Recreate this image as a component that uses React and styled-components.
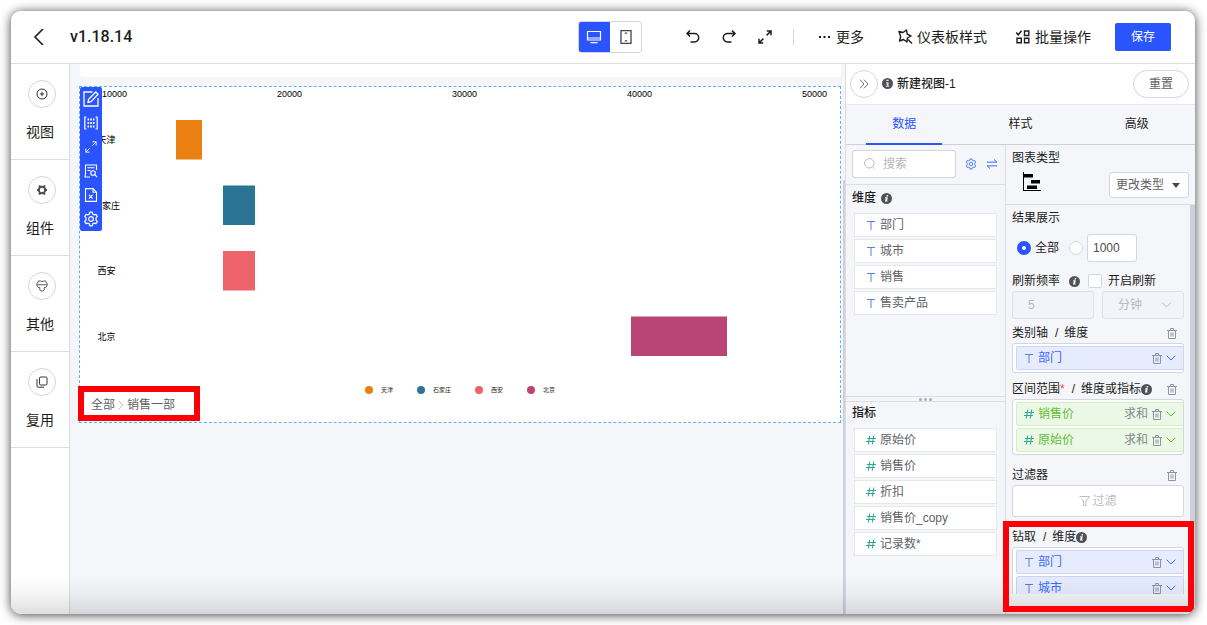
import React, { useState } from "react";
import styled, { createGlobalStyle, css } from "styled-components";

const blue = "#2954ff";
const line = "#dcdee2";
const field = "#d3d5df";
const ground = "#f5f6fa";
const ink = "#1b1d21";
const soft = "#606266";

const GlobalStyle = createGlobalStyle`
  * { box-sizing: border-box; }
  body { margin: 0; background: #fff; }
  body, button, input, select {
    font-family: "Liberation Sans", "Noto Sans CJK SC", sans-serif;
    font-size: 12px;
    line-height: 18px;
    color: ${ink};
  }
  button { padding: 0; border: 0; background: none; cursor: pointer; }
  svg { display: block; flex: none; }
`;

const Page = styled.div`
  height: 100vh;
  min-height: 600px;
  padding: 11px 12px 11px 11px;
`;

const Window = styled.div`
  position: relative;
  display: flex;
  flex-direction: column;
  height: 100%;
  overflow: hidden;
  border-radius: 10px;
  background: #fff;
`;

const Frame = styled.div`
  height: 100%;
  border-radius: 10px;
  box-shadow: 0 1px 11px rgba(0, 0, 0, 0.75);
`;

const BottomShade = styled.div`
  position: absolute;
  inset: auto 0 0 0;
  height: 40px;
  background: linear-gradient(rgba(0, 0, 0, 0), rgba(0, 0, 0, 0.04) 50%, rgba(0, 0, 0, 0.13));
  pointer-events: none;
`;

const Header = styled.header`
  display: flex;
  align-items: center;
  flex: none;
  height: 53px;
  padding: 0 24px 0 20px;
  border-bottom: 1px solid ${line};
`;

const Title = styled.h1`
  flex: 1;
  margin: 0 0 0 23px;
  font: 500 16px/24px Roboto, "Noto Sans CJK SC", sans-serif;
`;

const DeviceSwitch = styled.div`
  display: flex;
  height: 32px;
  margin-right: 43px;
  overflow: hidden;
  border: 1px solid ${field};
  border-radius: 3px;
`;

const DeviceButton = styled.button`
  display: grid;
  place-items: center;
  width: 31px;
  ${(p) => p.$active && css`
    width: 32px;
    margin: -1px 0 -1px -1px;
    background: ${blue};
    color: #fff;
  `}
`;

const History = styled.div`
  display: flex;
  gap: 20px;
  align-items: center;
`;

const Rule = styled.span`
  width: 1px;
  height: 16px;
  margin-right: 2px;
  background: ${field};
`;

const Actions = styled.div`
  display: flex;
  align-items: center;
  gap: 28px;
  margin: 0 24px 0 20px;
`;

const ActionButton = styled.button`
  display: flex;
  align-items: center;
  gap: 4px;
  font-size: 14px;
  line-height: 22px;
  white-space: nowrap;
  &:first-child { margin-right: 5px; }
`;

const SaveButton = styled.button`
  width: 56px;
  height: 28px;
  border-radius: 2px;
  background: ${blue};
  color: #fff;
`;

const Body = styled.div`
  display: flex;
  flex: 1;
  min-height: 0;
`;

const Sidebar = styled.nav`
  flex: none;
  width: 59px;
  border-right: 1px solid ${line};
`;

const SideItem = styled.button`
  display: flex;
  flex-direction: column;
  align-items: center;
  gap: 12px;
  width: 100%;
  height: 96px;
  padding-top: 16px;
  padding-left: 4px;
  border-bottom: 1px solid ${line};
  font-size: 14px;
  line-height: 24px;
`;

const SideLabel = styled.span`
  margin-right: 4px;
`;

const Circle = styled.span`
  display: grid;
  place-items: center;
  flex: none;
  width: 28px;
  height: 28px;
  border: 1px solid ${field};
  border-radius: 50%;
  background: #fff;
`;

const Canvas = styled.main`
  flex: 1;
  min-width: 0;
  padding: 0 2px 0 9px;
  background: ${ground};
`;

const UpperCard = styled.div`
  height: 13px;
  margin: 0 0 9px 1px;
  border-radius: 0 0 4px 4px;
  background: #fff;
`;

const ChartCard = styled.section`
  position: relative;
  min-height: 337px;
  border: 1px dashed #5fb0fb;
  background: #fff;
`;

const Chart = styled.svg`
  width: 100%;
  height: auto;
  font-family: "Liberation Sans", "Noto Sans CJK SC", sans-serif;
`;

const ChartTools = styled.div`
  position: absolute;
  top: 0;
  left: 0;
  border-radius: 2px;
  background: ${blue};
`;

const ToolButton = styled.button`
  display: grid;
  place-items: center;
  width: 22px;
  height: 24px;
  color: #fff;
`;

const Crumbs = styled.div`
  position: relative;
  display: flex;
  align-items: center;
  gap: 3px;
  width: fit-content;
  height: 35px;
  padding: 0 25px 0 11px;
`;

const CrumbLink = styled.a`
  color: ${soft};
  text-decoration: none;
`;

const Highlight = styled.div`
  position: absolute;
  z-index: 1;
  inset: ${(p) => p.$inset};
  height: ${(p) => p.$height};
  border: 6px solid #fb0007;
  pointer-events: none;
`;

const ScrollThumb = styled.div`
  flex: none;
  width: ${(p) => p.$width};
  margin-top: ${(p) => p.$top};
  background: #cfd0dc;
`;

const CanvasArea = styled.div`
  display: flex;
  flex: 1;
  min-width: 0;
  background: ${ground};
`;

const Panel = styled.aside`
  display: flex;
  flex-direction: column;
  flex: none;
  width: 350px;
  border-left: 1px solid ${line};
  background: ${ground};
`;

const PanelHead = styled.div`
  display: flex;
  align-items: center;
  gap: 4px;
  height: 41px;
  padding: 0 6px 1px 4px;
  border-bottom: 1px solid #e6e7eb;
  background: #fff;
`;

const PanelTitle = styled.h2`
  flex: 1;
  margin: 0;
  font-size: 12px;
  font-weight: 500;
`;

const ResetButton = styled.button`
  width: 56px;
  height: 28px;
  border: 1px solid ${field};
  border-radius: 14px;
  background: #fff;
  color: ${soft};
`;

const Tabs = styled.div`
  display: grid;
  grid-template-columns: repeat(3, 1fr);
  height: 40px;
  border-bottom: 1px solid #cfd0d6;
`;

const Tab = styled.button`
  margin: 0 20px -1px;
  border-bottom: 2px solid ${(p) => (p.$active ? blue : "transparent")};
  color: ${(p) => (p.$active ? blue : ink)};
`;

const Columns = styled.div`
  display: flex;
  flex: 1;
  min-height: 0;
`;

const FieldColumn = styled.div`
  flex: none;
  width: 160px;
  border-right: 1px solid ${line};
`;

const SearchBar = styled.div`
  display: flex;
  align-items: center;
  gap: 9px;
  height: 40px;
  padding: 0 7px 2px 6px;
  border-bottom: 1px solid ${line};
`;

const SearchBox = styled.label`
  display: flex;
  align-items: center;
  flex: 1;
  gap: 8px;
  min-width: 0;
  height: 28px;
  padding: 0 11px;
  border: 1px solid ${field};
  border-radius: 3px;
  background: #fff;
`;

const SearchInput = styled.input`
  width: 100%;
  min-width: 0;
  padding: 0;
  border: 0;
  outline: 0;
  background: none;
  &::placeholder { color: #b4b8c0; }
`;

const FieldGroup = styled.section`
  height: ${(p) => p.$height || "auto"};
  padding: ${(p) => p.$pad} 8px 0;
`;

const GroupTitle = styled.h3`
  display: flex;
  align-items: center;
  gap: 5px;
  height: 20px;
  margin: 0 -2px 5px;
  font-size: 12px;
  font-weight: 500;
`;

const FieldList = styled.ul`
  display: grid;
  gap: 2px;
  margin: 0;
  padding: 0;
  list-style: none;
`;

const FieldItem = styled.li`
  display: flex;
  align-items: center;
  gap: 4px;
  height: 24px;
  padding-left: 11px;
  border: 1px solid #e6e8ec;
  background: #fff;
  color: ${soft};
`;

const Splitter = styled.div`
  display: flex;
  align-items: center;
  justify-content: center;
  gap: 2px;
  height: 6px;
  border: 1px solid ${line};
  border-width: 1px 0;
`;

const Dot = styled.i`
  width: 3px;
  height: 3px;
  border-radius: 50%;
  background: #a9abb5;
`;

const ConfigColumn = styled.div`
  position: relative;
  display: flex;
  flex-direction: column;
  flex: 1;
  min-width: 0;
`;

const TypeBlock = styled.div`
  flex: none;
  height: 60px;
  padding: 3px 6px 0;
  border-bottom: 1px solid ${line};
`;

const TypeRow = styled.div`
  display: flex;
  align-items: flex-start;
  justify-content: space-between;
  margin-top: 4px;
  padding-left: 10px;
`;

const ScrollRow = styled.div`
  display: flex;
  flex: 1;
  min-height: 0;
`;

const Settings = styled.div`
  flex: 1;
  min-width: 0;
  margin-bottom: 20px;
  padding: 3px 6px 0;
  overflow: hidden;
`;

const LabelRow = styled.div`
  display: flex;
  align-items: center;
  justify-content: space-between;
  height: 20px;
  margin-top: ${(p) => p.$top || "0"};
  padding-right: 7px;
  white-space: nowrap;
`;

const LabelText = styled.span`
  display: flex;
  align-items: center;
`;

const Slash = styled.span`
  margin: 0 6px 0 7px;
`;

const Star = styled.span`
  color: #f54a45;
`;

const IconButton = styled.button`
  color: ${(p) => p.$tone || "#8f93a3"};
`;

const OptionRow = styled.div`
  display: flex;
  align-items: center;
  height: 28px;
  margin-top: 6px;
  padding-left: 5px;
`;

const Choice = styled.label`
  display: flex;
  align-items: center;
  gap: 4px;
  margin-right: ${(p) => p.$after || "0"};
`;

const Radio = styled.input`
  appearance: none;
  width: 14px;
  height: 14px;
  margin: 0;
  border: 1px solid ${field};
  border-radius: 50%;
  background: #fff;
  &:checked { border: 5px solid ${blue}; }
`;

const CheckBox = styled.input`
  appearance: none;
  width: 14px;
  height: 14px;
  margin: 0 2px 0 0;
  border: 1px solid ${field};
  border-radius: 2px;
  background: #fff;
  &:checked { background: ${blue}; }
`;

const InputBox = styled.input`
  width: ${(p) => p.$width};
  height: 28px;
  padding: 0 5px;
  border: 1px solid ${field};
  border-radius: 3px;
  background: #fff;
  color: #4b4e54;
  &:disabled {
    padding: 0 15px;
    border-color: #dfe1e8;
    background: #f2f4f9;
    color: #b6bac3;
  }
`;

const RefreshRow = styled.div`
  display: grid;
  grid-template-columns: 1fr 1fr;
  gap: 8px;
`;

const SelectWrap = styled.label`
  position: relative;
  display: block;
  width: ${(p) => p.$width};
`;

const Select = styled.select`
  appearance: none;
  width: 100%;
  height: ${(p) => p.$height};
  padding: 0 ${(p) => p.$pad};
  border: 1px solid ${field};
  border-radius: 3px;
  background: #fff;
  color: ${soft};
  &:disabled {
    border-color: #dfe1e8;
    background: #f2f4f9;
    color: #b6bac3;
    opacity: 1;
  }
`;

const SelectArrow = styled.span`
  position: absolute;
  top: 0;
  right: ${(p) => p.$right};
  display: flex;
  align-items: center;
  height: 100%;
  color: ${(p) => p.$tone};
  pointer-events: none;
`;

const PillBox = styled.div`
  display: grid;
  gap: 2px;
  padding: 2px 0 2px 3px;
  border: 1px solid ${field};
  border-radius: 3px;
  background: #fff;
`;

const Pill = styled.div`
  display: flex;
  align-items: center;
  gap: 4px;
  height: 24px;
  padding: 0 7px;
  border: 1px solid ${(p) => (p.$green ? "#d3efc4" : "#c5d5fb")};
  border-right: 0;
  border-radius: 3px 0 0 3px;
  background: ${(p) => (p.$green ? "#ecf8e6" : "#e6ecfe")};
  color: ${(p) => (p.$green ? "#60bf33" : "#3d6bfb")};
`;

const PillName = styled.span`
  flex: 1;
`;

const PillSum = styled.span`
  color: #85898f;
`;

const FilterButton = styled.button`
  display: flex;
  align-items: center;
  justify-content: center;
  gap: 2px;
  width: 100%;
  height: 32px;
  border: 1px solid ${field};
  border-radius: 3px;
  background: #fff;
  color: #bbbdc2;
`;

function Icon({ w = 16, h = w, box, sw = 1.2, color, children }) {
  return (
    <svg
      width={w}
      height={h}
      viewBox={box || `0 0 ${w} ${h}`}
      fill="none"
      stroke="currentColor"
      strokeWidth={sw}
      color={color}
      aria-hidden="true"
    >
      {children}
    </svg>
  );
}

const gearPath =
  "M6.8 1.2h2.4l.5 1.9 1.3.7 1.9-.5 1.4 2.1-1.3 1.6v2l1.3 1.6-1.4 2.1-1.9-.5-1.3.7-.5 1.9H6.8l-.5-1.9-1.3-.7-1.9.5-1.4-2.1L3 9V7L1.7 5.4 3.1 3.3 5 3.8l1.3-.7z";

const Gear = ({ size = 14, color }) => (
  <Icon w={size} box="0 0 16 16" color={color} sw={1.2}>
    <path d={gearPath} strokeLinejoin="round" />
    <circle cx="8" cy="8" r="2.3" />
  </Icon>
);

const Info = ({ size = 11, upright }) => (
  <Icon w={size} box="0 0 12 12" sw={0}>
    <circle cx="6" cy="6" r="6" fill="#4f5256" />
    {upright ? (
      <path d="M4.6 2h2.6v1.4H4.6zM4.4 4.6h2.8v4h.8v1H4.2v-1h.9V5.5h-.7z" fill="#dcdcdc" />
    ) : (
      <path d="M6.2 2.2h1.7L7.6 3.7H5.9zM4.7 4.7h2.7l-.8 3.8h.7l-.2.9H4.3l.9-3.8h-.7z" fill="#fff" />
    )}
  </Icon>
);

const Trash = () => (
  <Icon w={10} h={11} sw={1}>
    <path d="M0 2.5h10M3.5 2.5v-2h3v2M1.5 2.5v8h7v-8M4 4.5v4M6 4.5v4" />
  </Icon>
);

const Chevron = ({ w = 10 }) => (
  <Icon w={w} h={6} box="0 0 10 6" sw={1}>
    <path d="M.7.7 5 5 9.3.7" />
  </Icon>
);

const TextGlyph = () => (
  <Icon w={10} h={10} color="#5a7fd8" sw={1}>
    <path d="M1 1.5h8M5 1.5V10" />
  </Icon>
);

const HashGlyph = () => (
  <Icon w={10} h={10} color="#2fa896" sw={1.1}>
    <path d="M3.8.5 2.3 9.5M7.8.5 6.3 9.5M1 3.5h9M0 6.500h9" />
  </Icon>
);

const Expand = ({ size = 14, sw = 1.4 }) => (
  <Icon w={size} box="0 0 14 14" sw={sw}>
    <path d="M8.800 1H13v4.200M13 1 8.600 5.400M5.200 13H1V8.800M1 13l4.400-4.400" />
  </Icon>
);

const sideItems = [
  {
    label: "视图",
    icon: (
      <Icon w={12} sw={0.9}>
        <circle cx="6" cy="6" r="5" />
        <path d="M6 3.800v4.400M3.800 6h4.400" />
      </Icon>
    ),
  },
  {
    label: "组件",
    icon: (
      <Icon w={12} sw={2} color="#4b4e55">
        <circle cx="6" cy="6" r="3.200" />
        <path d="M3.300 1.300 4 3M8.700 1.300 8 3M1 6h1.500M9.500 6H11M3.300 10.700 4 9M8.700 10.700 8 9" />
      </Icon>
    ),
  },
  {
    label: "其他",
    icon: (
      <Icon w={12} sw={0.9} color="#4b4e55">
        <path d="M2.200 1h2.300q1.500 1 3 0h2.300l.4 1.800 1 .7v1.800L9.800 7.500H8.200V10L7 11H5l-1.200-1V7.500H2.200L.8 5.300V3.500l1-.7zM1 4.800h10" />
      </Icon>
    ),
  },
  {
    label: "复用",
    icon: (
      <Icon w={12} sw={0.9}>
        <rect x="3.500" y="1" width="7.500" height="8" rx="1.200" />
        <path d="M1 3v7q0 1.200 1.200 1.200h6" />
      </Icon>
    ),
  },
];

const tools = [
  ["编辑", <Icon w={16} sw={1.3}><path d="M9.500 1H1v14h14V7" /><path d="M5 11.300 5.600 8.300 12.800 1l2.300 2.300L8 10.600z" /></Icon>],
  ["边距", <Icon w={14} sw={1.2}><path d="M2.500 1H.8v12h1.700M11.500 1h1.700v12h-1.700" /><path d="M3.500 3.500h7M3.500 7h7M3.500 10.500h7" strokeWidth="2" strokeDasharray="1.600 1.100" /></Icon>],
  ["放大", <Expand size={12} sw={1.1} />],
  ["查看数据", <Icon w={14} sw={1.1}><path d="M1.500 10V1h11v5M3.500 3.800h7M3.500 6.500h3M1.500 9.500 1 13h5" /><circle cx="9" cy="9" r="2.300" /><path d="m10.700 10.700 2.500 2.500" /></Icon>],
  ["导出", <Icon w={14} sw={1.1}><path d="M1.500.600H9l3.500 3.600v9.200h-11zM9 .6v3.600h3.500M5 6.800l3.600 3.800M8.600 6.800 5 10.600" /></Icon>],
  ["设置", <Gear size={16} color="#fff" />],
];

const bars = [
  { name: "天津", x: 96, w: 26, y: 33, color: "#ea7f12" },
  { name: "石家庄", x: 143, w: 32, y: 98.500, color: "#2a7595" },
  { name: "西安", x: 143, w: 32, y: 164, color: "#ec6469" },
  { name: "北京", x: 551, w: 96, y: 229.500, color: "#b94476" },
];

function RangeChart() {
  return (
    <Chart viewBox="0 0 760 300" role="img" aria-label="区间条形图">
      {[10000, 20000, 30000, 40000, 50000].map((v, i) => (
        <text key={v} x={34.500 + i * 175} y="10" fontSize="9" textAnchor="middle" fill="#000">{v}</text>
      ))}
      {bars.map((b) => (
        <g key={b.name}>
          <text x="26.500" y={b.y + 23} fontSize="9" textAnchor="middle" fill="#000">{b.name}</text>
          <rect x={b.x} y={b.y} width={b.w} height="39.500" fill={b.color} />
        </g>
      ))}
    </Chart>
  );
}

const Legend = styled.div`
  position: absolute;
  inset: 298px 0 auto 285px;
  display: flex;
  gap: 24px;
  font-size: 6px;
  line-height: 10px;
`;

const LegendItem = styled.span`
  display: flex;
  align-items: center;
  gap: 8px;
  &::before {
    content: "";
    width: 8px;
    height: 8px;
    border-radius: 50%;
    background: ${(p) => p.$color};
  }
`;

const dimensions = ["部门", "城市", "销售", "售卖产品"];
const measures = ["原始价", "销售价", "折扣", "销售价_copy", "记录数*"];

function PillRow({ name, sum }) {
  return (
    <Pill $green={Boolean(sum)}>
      {sum ? <HashGlyph /> : <TextGlyph />}
      <PillName>{name}</PillName>
      {sum && <PillSum>{sum}</PillSum>}
      <IconButton aria-label="删除"><Trash /></IconButton>
      <Chevron />
    </Pill>
  );
}

export default function App() {
  const [tab, setTab] = useState("数据");
  return (
    <Page>
      <GlobalStyle />
      <Frame>
        <Window>
          <Header>
            <IconButton $tone={ink} aria-label="返回">
              <Icon w={16} sw={1.6}><path d="M12 0 4 8l8 8" /></Icon>
            </IconButton>
            <Title>v1.18.14</Title>
            <DeviceSwitch>
              <DeviceButton $active aria-label="电脑">
                <Icon w={16} sw={1.2}>
                  <path d="M1.500 2.500h13v8.500h-13zM1.500 9h13" />
                  <path d="M4.500 13.700h7" />
                </Icon>
              </DeviceButton>
              <DeviceButton aria-label="手机">
                <Icon w={12} h={14} sw={1.3} color="#42454b">
                  <path d="M1 .7h10v12.600H1z" />
                  <path d="M4.800 3.200h2.400M4.800 10.800h2.400" />
                </Icon>
              </DeviceButton>
            </DeviceSwitch>
            <History>
              <IconButton $tone={ink} aria-label="撤销">
                <Icon sw={1.5}><path d="M5 1.500 2 4.500l3 3M2 4.500h7.500a4.200 4.200 0 0 1 0 8.400H5.500" /></Icon>
              </IconButton>
              <IconButton $tone={ink} aria-label="重做">
                <Icon sw={1.5}><path d="M11 1.500 14 4.500l-3 3M14 4.500H6.500a4.200 4.200 0 0 0 0 8.400h4" /></Icon>
              </IconButton>
              <IconButton $tone={ink} aria-label="全屏">
                <Icon w={16} box="-1 -1 16 16" sw={1.5}>
                  <path d="M8.800 1H13v4.200M13 1 8.600 5.400M5.200 13H1V8.800M1 13l4.400-4.400" />
                </Icon>
              </IconButton>
              <Rule />
            </History>
            <Actions>
              <ActionButton>
                <Icon sw={2}><path d="M3 8h2M7.500 8h2M12 8h2" /></Icon>
                更多
              </ActionButton>
              <ActionButton>
                <Icon sw={1.4}>
                  <path d="M2 2.500 6 3.500 9.500 1l.7 4.200L14 7l-3.700 2L10 13 6.500 10.500 2.500 12l1.200-4.200z" strokeLinejoin="round" />
                  <path d="m11 10.500 4 4" />
                </Icon>
                仪表板样式
              </ActionButton>
              <ActionButton>
                <Icon sw={1.4}>
                  <path d="M9.500 2h4.300v4.500H9.500zM9.500 9.300h4.300v4.400H9.500zM2 9.300h4.300v4.400H2zM1.200 3.500l2 2.300 3.300-4" />
                </Icon>
                批量操作
              </ActionButton>
            </Actions>
            <SaveButton>保存</SaveButton>
          </Header>

          <Body>
            <Sidebar>
              {sideItems.map((s) => (
                <SideItem key={s.label}>
                  <Circle>{s.icon}</Circle>
                  <SideLabel>{s.label}</SideLabel>
                </SideItem>
              ))}
            </Sidebar>

            <CanvasArea>
              <Canvas>
                <UpperCard />
                <ChartCard>
                  <RangeChart />
                  <Legend>
                    {bars.map((b) => (
                      <LegendItem key={b.name} $color={b.color}>{b.name}</LegendItem>
                    ))}
                  </Legend>
                  <ChartTools>
                    {tools.map(([label, icon]) => (
                      <ToolButton key={label} aria-label={label}>{icon}</ToolButton>
                    ))}
                  </ChartTools>
                  <Crumbs>
                    <CrumbLink href="#all">全部</CrumbLink>
                    <Icon w={6} h={10} sw={0.9} color="#b4b8c0"><path d="m.8.800 4 4.200-4 4.200" /></Icon>
                    <CrumbLink href="#sales">销售一部</CrumbLink>
                    <Highlight $inset="-1px 0 auto -2px" $height="35px" />
                  </Crumbs>
                </ChartCard>
              </Canvas>
              <ScrollThumb $width="2px" $top="116px" />
            </CanvasArea>

            <Panel>
              <PanelHead>
                <Circle as="button" aria-label="收起">
                  <Icon w={10} sw={0.9} color="#55585e"><path d="m1 .700 4 4.300-4 4.300M5 .700 9 5 5 9.300" /></Icon>
                </Circle>
                <Info upright />
                <PanelTitle>新建视图-1</PanelTitle>
                <ResetButton>重置</ResetButton>
              </PanelHead>
              <Tabs role="tablist">
                {["数据", "样式", "高级"].map((t) => (
                  <Tab key={t} role="tab" aria-selected={t === tab} $active={t === tab} onClick={() => setTab(t)}>
                    {t}
                  </Tab>
                ))}
              </Tabs>
              <Columns>
                <FieldColumn>
                  <SearchBar>
                    <SearchBox>
                      <Icon w={11} sw={0.9} color="#b0b4bd">
                        <circle cx="5.300" cy="5.300" r="4.700" />
                        <path d="m8.500 8.700 2 2" />
                      </Icon>
                      <SearchInput placeholder="搜索" aria-label="搜索" />
                    </SearchBox>
                    <IconButton $tone="#3d6bfb" aria-label="字段设置"><Gear size={12} /></IconButton>
                    <IconButton $tone="#3d6bfb" aria-label="切换">
                      <Icon w={12} h={10} sw={1}><path d="M1 3.200h10L8 .500M11 6.800H1l3 2.700" /></Icon>
                    </IconButton>
                  </SearchBar>
                  <FieldGroup $pad="3px" $height="211px">
                    <GroupTitle>维度<Info /></GroupTitle>
                    <FieldList>
                      {dimensions.map((d) => (
                        <FieldItem key={d}><TextGlyph />{d}</FieldItem>
                      ))}
                    </FieldList>
                  </FieldGroup>
                  <Splitter><Dot /><Dot /><Dot /></Splitter>
                  <FieldGroup $pad="1px">
                    <GroupTitle>指标</GroupTitle>
                    <FieldList>
                      {measures.map((m) => (
                        <FieldItem key={m}><HashGlyph />{m}</FieldItem>
                      ))}
                    </FieldList>
                  </FieldGroup>
                </FieldColumn>

                <ConfigColumn>
                  <TypeBlock>
                    <LabelRow>图表类型</LabelRow>
                    <TypeRow>
                      <Icon w={20} sw={0} color="#000">
                        <path d="M1 0h1v18h17v1H1zM2 2h9v3.500H2zM9 8h9v3.500H9zM5 13.500h10V17H5z" fill="#000" />
                      </Icon>
                      <SelectWrap $width="80px">
                        <Select $height="26px" $pad="6px" aria-label="更改类型" defaultValue="t">
                          <option value="t">更改类型</option>
                        </Select>
                        <SelectArrow $right="9px" $tone="#45484e">
                          <Icon w={8} h={5} sw={0}><path d="M0 0h8L4 5z" fill="currentColor" /></Icon>
                        </SelectArrow>
                      </SelectWrap>
                    </TypeRow>
                  </TypeBlock>

                  <ScrollRow>
                    <Settings>
                      <LabelRow>结果展示</LabelRow>
                      <OptionRow>
                        <Choice $after="10px">
                          <Radio type="radio" name="limit" defaultChecked />
                          全部
                        </Choice>
                        <Choice>
                          <Radio type="radio" name="limit" aria-label="限制条数" />
                          <InputBox $width="50px" defaultValue="1000" aria-label="条数" />
                        </Choice>
                      </OptionRow>

                      <LabelRow $top="9px">
                        <LabelText>刷新频率</LabelText>
                        <Info />
                        <Choice $after="21px">
                          <CheckBox type="checkbox" />
                          开启刷新
                        </Choice>
                      </LabelRow>
                      <RefreshRow>
                        <InputBox $width="100%" disabled defaultValue="5" aria-label="刷新间隔" />
                        <SelectWrap $width="100%">
                          <Select $height="28px" $pad="15px" disabled aria-label="时间单位" defaultValue="m">
                            <option value="m">分钟</option>
                          </Select>
                          <SelectArrow $right="12px" $tone="#b6bac3"><Chevron w={11} /></SelectArrow>
                        </SelectWrap>
                      </RefreshRow>

                      <LabelRow $top="4px">
                        <LabelText>类别轴<Slash>/</Slash>维度</LabelText>
                        <IconButton aria-label="清空"><Trash /></IconButton>
                      </LabelRow>
                      <PillBox><PillRow name="部门" /></PillBox>

                      <LabelRow $top="6px">
                        <LabelText>区间范围<Star>*</Star><Slash>/</Slash>维度或指标<Info /></LabelText>
                        <IconButton aria-label="清空"><Trash /></IconButton>
                      </LabelRow>
                      <PillBox>
                        <PillRow name="销售价" sum="求和" />
                        <PillRow name="原始价" sum="求和" />
                      </PillBox>

                      <LabelRow $top="10px">
                        <LabelText>过滤器</LabelText>
                        <IconButton aria-label="清空"><Trash /></IconButton>
                      </LabelRow>
                      <FilterButton>
                        <Icon w={11} h={10} sw={1}><path d="M.5.500h10L7 5v4.500H4.500V5L2.500 2.500" /></Icon>
                        过滤
                      </FilterButton>

                      <LabelRow $top="10px">
                        <LabelText>钻取<Slash>/</Slash>维度<Info /></LabelText>
                      </LabelRow>
                      <PillBox>
                        <PillRow name="部门" />
                        <PillRow name="城市" />
                      </PillBox>
                    </Settings>
                    <ScrollThumb $width="5px" $top="0" />
                  </ScrollRow>
                  <Highlight $inset="auto 1px 2px -3px" $height="91px" />
                </ConfigColumn>
              </Columns>
            </Panel>
          </Body>
          <BottomShade />
        </Window>
      </Frame>
    </Page>
  );
}
